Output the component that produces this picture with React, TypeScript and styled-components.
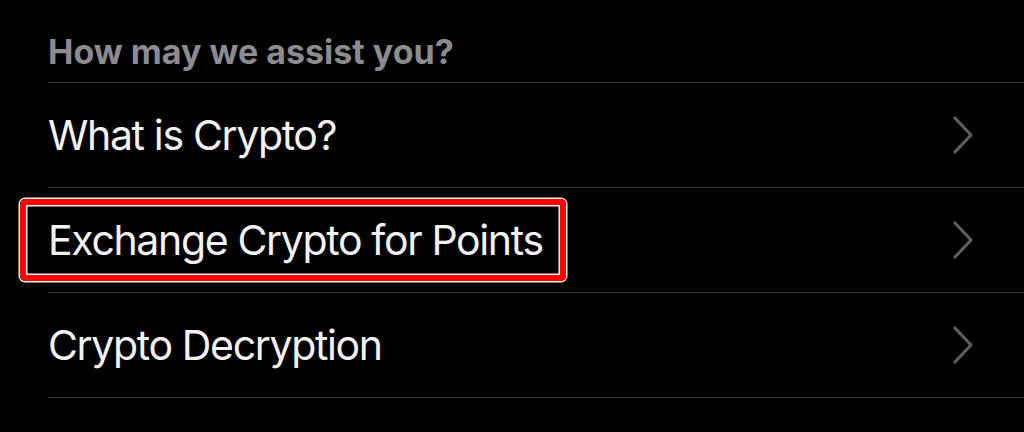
import React from "react";
import styled, { createGlobalStyle, css } from "styled-components";

const GlobalStyle = createGlobalStyle`
    html, body {
        margin: 0;
        padding: 0;
        background: #000;
    }
    body {
        font-family: Inter, "Noto Sans", "Liberation Sans", sans-serif;
        -webkit-font-smoothing: antialiased;
    }
`;

const Page = styled.main`
    width: 1024px;
    height: 432px;
    background: #000;
    overflow: hidden;
    padding-left: 48px;
    box-sizing: border-box;
`;

const SectionHeader = styled.h2`
    margin: 0;
    height: 83px;
    box-sizing: border-box;
    padding-top: 32px;
    font-size: 34px;
    line-height: 40px;
    font-weight: 700;
    color: #8b8b90;
    border-bottom: 1px solid #3a3a3c;
    letter-spacing: 0;
`;

const List = styled.ul`
    margin: 0;
    padding: 0;
    list-style: none;
`;

const Row = styled.li`
    display: flex;
    align-items: center;
    justify-content: space-between;
    height: 105px;
    box-sizing: border-box;
    border-bottom: 1px solid #3a3a3c;
    padding-right: 50px;
`;

const Label = styled.span<{ $marked?: boolean }>`
    position: relative;
    font-size: 41px;
    font-weight: 400;
    color: #f2f2f2;
    line-height: 50px;
    letter-spacing: -1.35px;

    ${(p) =>
        p.$marked &&
        css`
            &::before {
                content: "";
                position: absolute;
                left: -28px;
                right: -23px;
                top: -16px;
                bottom: -16px;
                border: 6px solid #ff0000;
                border-radius: 5px;
                box-shadow: 0 0 0 1.5px #f4f4f4, inset 0 0 0 1.5px #f4f4f4;
            }
        `}
`;

const Chevron = styled.svg`
    width: 22px;
    height: 38px;
    flex-shrink: 0;
`;

const items = [
    { title: "What is Crypto?" },
    { title: "Exchange Crypto for Points", marked: true },
    { title: "Crypto Decryption" },
];

function App() {
    return (
        <Page>
            <GlobalStyle />
            <SectionHeader>How may we assist you?</SectionHeader>
            <List>
                {items.map((item) => (
                    <Row key={item.title}>
                        <Label $marked={item.marked}>{item.title}</Label>
                        <Chevron viewBox="0 0 22 38">
                            <path
                                d="M3 2 L19 19 L3 36"
                                fill="none"
                                stroke="#5e5e62"
                                strokeWidth="3.2"
                                strokeLinecap="round"
                                strokeLinejoin="round"
                            />
                        </Chevron>
                    </Row>
                ))}
            </List>
        </Page>
    );
}

export default App;
